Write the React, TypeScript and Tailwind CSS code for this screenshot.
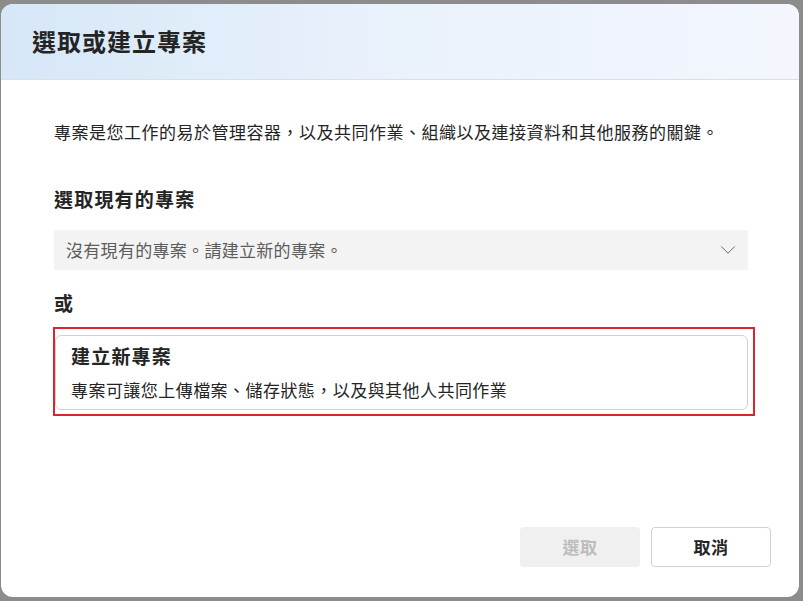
import React from 'react';

const font = { fontFamily: '"Noto Sans CJK TC", "Noto Sans", sans-serif' };

const ChevronDown: React.FC = () => (
  <svg width="16" height="16" viewBox="0 0 16 16" fill="none" className="text-[#616161]">
    <path d="M1.5 4.75 L8 11.25 L14.5 4.75" stroke="currentColor" strokeWidth="1" strokeLinecap="round" strokeLinejoin="round" />
  </svg>
);

const App: React.FC = () => {
  return (
    <div className="w-[803px] h-[601px] bg-[#8c8c8c] pt-[4px] pl-[1px] overflow-hidden" style={font}>
      <div className="w-[798px] h-[593px] bg-white rounded-[12px] overflow-hidden flex flex-col">
        {/* Header */}
        <div className="h-[76px] shrink-0 bg-gradient-to-r from-[#d6e7f7] via-[#eaf2fc] to-[#f3f6fd] border-b border-[#dcdfe3] flex items-center pl-[31px]">
          <h1 className="text-[24px] leading-[30px] font-bold text-[#242424] tracking-[1px] -mt-[1px]">選取或建立專案</h1>
        </div>

        {/* Body */}
        <div className="flex-1 flex flex-col pl-[53px] pr-[51px] pt-[40px]">
          <p className="text-[17px] leading-[24px] text-[#242424] tracking-[0.5px] whitespace-nowrap">
            專案是您工作的易於管理容器，以及共同作業、組織以及連接資料和其他服務的關鍵。
          </p>

          <h2 className="mt-[41px] text-[19px] leading-[28px] font-bold text-[#242424] tracking-[1.2px]">選取現有的專案</h2>

          <div className="mt-[17px] h-[40px] bg-[#f3f3f3] flex items-center justify-between pl-[12px] pr-[12px]">
            <span className="text-[17px] text-[#5c5c5c] tracking-[0.3px]">沒有現有的專案。請建立新的專案。</span>
            <ChevronDown />
          </div>

          <div className="mt-[19px] text-[19px] leading-[28px] font-bold text-[#242424]">或</div>

          <div className="relative mt-[18px] ml-[1px]">
            <div className="border border-[#d1d1d1] rounded-[6px] pl-[15px] pt-[7px] pb-[7px]">
              <div className="text-[19px] leading-[26px] font-bold text-[#242424] tracking-[1.2px]">建立新專案</div>
              <div className="mt-[9px] text-[17px] leading-[24px] text-[#242424] tracking-[0.45px]">
                專案可讓您上傳檔案、儲存狀態，以及與其他人共同作業
              </div>
            </div>
            <div className="absolute -left-[2px] -right-[7px] -top-[8px] -bottom-[6px] border-2 border-[#d9262e] pointer-events-none" />
          </div>

          <div className="flex-1" />
        </div>

        {/* Footer */}
        <div className="flex justify-end gap-[11px] pr-[28px] pb-[30px]">
          <button disabled className="w-[120px] h-[40px] rounded-[4px] bg-[#f0f0f0] text-[17px] font-bold text-[#bdbdbd] tracking-[0.5px]">選取</button>
          <button className="w-[120px] h-[40px] rounded-[4px] bg-white border border-[#d1d1d1] text-[17px] font-bold text-[#242424] tracking-[0.5px]">取消</button>
        </div>
      </div>
    </div>
  );
};

export default App;
